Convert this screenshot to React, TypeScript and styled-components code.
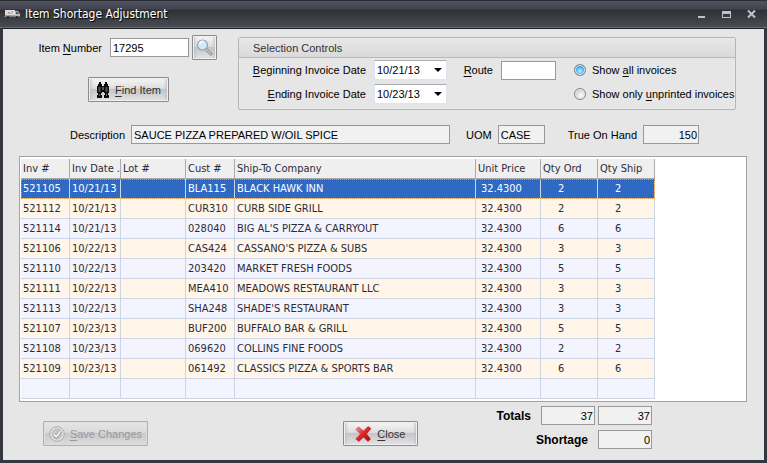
import React, { useState } from "react";
import styled, { createGlobalStyle, css } from "styled-components";

const GlobalStyle = createGlobalStyle`
  *, *::before, *::after { box-sizing: border-box; }
  body { margin: 0; background: #24262b; }
  u { text-decoration: underline; text-underline-offset: 2px; }
`;

const formFont = '"Liberation Sans", Arial, sans-serif';
const gridFont = '"DejaVu Sans Condensed", "DejaVu Sans", sans-serif';

const Window = styled.div`
  display: flex;
  flex-direction: column;
  min-height: 100vh;
  background: #34373d;
  font: 11px/14px ${formFont};
  color: #000;
`;

const TitleBar = styled.header`
  display: flex;
  align-items: center;
  height: 28px;
  padding: 0 7px 0 4px;
  border-top: 1px solid #2b2d33;
  border-bottom: 1px solid #666b76;
  background: linear-gradient(#50535f 0, #42454f 8px, #2f3135 9px, #484b52 100%);
`;

const Title = styled.h1`
  flex: 1;
  margin: 0 0 0 4px;
  font: 12px/16px ${gridFont};
  color: #fff;
  text-shadow: 1px 1px 1px #000;
`;

const WindowButtons = styled.div`
  display: flex;
  gap: 9px;
`;

const WindowButton = styled.button`
  display: flex;
  width: 16px;
  height: 16px;
  padding: 1px 2px;
  border: 0;
  background: none;
`;

const Body = styled.main`
  flex: 1;
  display: flex;
  flex-direction: column;
  margin: 0 3px 3px;
  border-top: 1px solid #1e2024;
  background: #e6e6e6;
`;

const TopRow = styled.div`
  display: flex;
  padding: 8px 28px 0 0;
`;

const ItemColumn = styled.div`
  display: flex;
  flex: none;
  flex-direction: column;
  align-items: flex-start;
  gap: 17px;
  width: 235px;
  padding-right: 21px;
  margin-top: -2px;
`;

const ItemLine = styled.div`
  display: flex;
  align-items: center;
  align-self: flex-end;
`;

const Label = styled.label<{ $bold?: boolean }>`
  white-space: nowrap;
  text-align: right;
  ${(p) => p.$bold && css`font: bold 12px/14px ${formFont};`}
`;

const ItemLabel = styled(Label)`
  margin-right: 8px;
`;

const TextBox = styled.input<{ $width: number }>`
  flex: none;
  width: ${(p) => p.$width}px;
  height: 19px;
  padding: 0 2px;
  border: 1px solid #999;
  border-radius: 0;
  background: #fff;
  color: #000;
  font: 11px/14px ${formFont};
  &:read-only { background: #f1f1f1; }
`;

const NumberBox = styled(TextBox)`
  padding-right: 1px;
  text-align: right;
`;

const PushButton = styled.button<{ $width: number }>`
  display: flex;
  flex: none;
  align-items: center;
  justify-content: center;
  gap: 5px;
  width: ${(p) => p.$width}px;
  height: 25px;
  padding: 0;
  border: 1px solid #8c8c8c;
  border-radius: 1px;
  background: linear-gradient(#f6f6f6 0, #dedee0 45%, #c5c5c8 50%, #e4e4e6 100%);
  box-shadow: inset 0 0 0 1px #f1f1f1, inset 3px 0 3px -1px #bdbdc0, inset -3px 0 3px -1px #bdbdc0;
  color: #333;
  font: 11px/14px ${formFont};
  white-space: nowrap;
  &:disabled {
    border-color: #b0b0b0;
    background: linear-gradient(#e6e6e6 0, #dadadb 45%, #c9c9cb 50%, #dcdcdd 100%);
    box-shadow: inset 0 0 0 1px #dedede;
    color: #999;
  }
`;

const LookupButton = styled(PushButton)`
  margin-left: 3px;
`;

const FindButton = styled(PushButton)`
  margin-left: 85px;
`;

const Panel = styled.section`
  flex: 1;
  border: 1px solid #b5b5b5;
  border-radius: 2px;
  box-shadow: inset 0 0 0 1px #ebebeb;
`;

const PanelTitle = styled.h2`
  margin: 0;
  padding: 3px 14px 2px;
  border-bottom: 1px solid #b9b9b9;
  background: linear-gradient(#e8e8e8, #dadada);
  font: 11px/14px ${formFont};
  color: #333;
`;

const PanelGrid = styled.div`
  display: grid;
  grid-template-columns: 127px 73px 38px 55px 1fr;
  grid-auto-rows: 20px;
  align-items: center;
  gap: 4px 8px;
  padding: 2px 0 5px;
`;

const RadioLabel = styled.label`
  grid-column: 5;
  display: flex;
  align-items: center;
  gap: 6px;
  margin-left: 10px;
  white-space: nowrap;
`;

const Radio = styled.input`
  appearance: none;
  flex: none;
  width: 12px;
  height: 12px;
  margin: 0;
  border: 1px solid #858585;
  border-radius: 50%;
  background: radial-gradient(circle at 60% 65%, #fff 0, #d3d3d3 60%);
  box-shadow: inset 0 0 0 1px #efefef;
  &:checked {
    background: radial-gradient(circle at 50% 60%, #c4f2ff 0, #4db7f5 45%, #2b86d8 70%);
  }
`;

const DateField = styled.div`
  display: grid;
  width: 73px;
  height: 20px;
  border: 1px solid #dfe3f0;
  border-top-color: #abadb3;
  background: #fff;
  & > * { grid-area: 1 / 1; }
  & > svg { justify-self: end; align-self: center; margin-right: 4px; pointer-events: none; }
`;

const DateSelect = styled.select`
  appearance: none;
  padding: 0 0 0 2px;
  border: 0;
  background: none;
  color: #000;
  font: 11px/14px ${formFont};
`;

const DescriptionRow = styled.div`
  display: flex;
  align-items: center;
  padding: 15px 65px 0 67px;
  gap: 6px;
`;

const Spacer = styled.span<{ $grow?: boolean }>`
  width: 4px;
  flex: ${(p) => (p.$grow ? "1 0 4px" : "none")};
`;

const GridFrame = styled.div`
  margin: 12px 17px 0 16px;
  padding: 2px 1px 2px;
  border: 1px solid #a3a3a3;
  background: #fff;
`;

const Table = styled.table`
  width: 634px;
  table-layout: fixed;
  border-collapse: separate;
  border-spacing: 0;
  font: 11px/14px ${gridFont};
  color: #2b2b38;
`;

const HeadCell = styled.th<{ $width: number }>`
  width: ${(p) => p.$width}px;
  height: 20px;
  padding: 0 0 0 2px;
  border-right: 1px solid #aaa;
  border-bottom: 1px solid #aaa;
  background: #efefef;
  font-weight: normal;
  text-align: left;
  white-space: nowrap;
`;

const SortMark = styled.span`
  margin-left: 3px;
`;

const Row = styled.tr<{ $selected?: boolean }>`
  background: #f4f4ff;
  &:nth-child(even) { background: #fff5e9; }
  ${(p) => p.$selected && css`
    background: #2f69c4;
    color: #fff;
    outline: 1px dotted #d09a50;
    outline-offset: -1px;
  `}
`;

const Cell = styled.td<{ $inset?: number }>`
  height: 20px;
  padding: 0 0 0 ${(p) => p.$inset ?? 2}px;
  border-right: 1px solid #ccd5e6;
  border-bottom: 1px solid #ccd5e6;
  white-space: nowrap;
`;

const Footer = styled.footer`
  display: flex;
  align-items: flex-start;
  padding: 4px 112px 11px 40px;
`;

const FooterGap = styled.span<{ $share: number }>`
  flex: ${(p) => p.$share} 1 0;
`;

const FooterButton = styled(PushButton)`
  margin-top: 15px;
`;

const Totals = styled.div`
  display: grid;
  grid-template-columns: 47px 54px 54px;
  align-items: center;
  justify-items: end;
  gap: 5px 3px;
`;

const TotalsLabel = styled(Label)<{ $span?: boolean }>`
  grid-column: ${(p) => (p.$span ? "1 / 3" : "1")};
  margin-right: 7px;
`;

const TruckIcon = () => (
  <svg width="17" height="10" viewBox="0 0 17 10" aria-hidden="true">
    <path d="M1 1h10v6H1z" fill="#dcdde0" />
    <path d="M1 6h10v1H1z" fill="#9a9ca3" />
    <path d="M4 5l1-2 1 2M7 5l2-3" stroke="#d8807a" fill="none" />
    <path d="M11 2h3l2 3v3h-5z" fill="#b9bcc4" />
    <path d="M12 3h2l1 2h-3z" fill="#50545e" />
    <path d="M0 7h16v1H0z" fill="#77797f" />
    <circle cx="4" cy="8" r="1" fill="#222" />
    <circle cx="13" cy="8" r="1" fill="#222" />
  </svg>
);

const MagnifierIcon = () => (
  <svg width="17" height="17" viewBox="0 0 17 17" aria-hidden="true">
    <path d="M10.500 10.500l4.500 4.500" stroke="#858585" strokeWidth="3" strokeLinecap="round" />
    <path d="M10 10l5 5" stroke="#d0d0d0" strokeWidth="1.200" strokeLinecap="round" />
    <circle cx="6.500" cy="6" r="5" fill="#cfeafa" stroke="#98a3ad" strokeWidth="1.200" />
    <path d="M3.500 5a3 3 0 0 1 4-2.300" stroke="#fff" strokeWidth="1.500" fill="none" />
  </svg>
);

const BinocularsIcon = () => (
  <svg width="14" height="16" viewBox="0 0 14 16" aria-hidden="true">
    <path d="M3 0h2v2h1v2h2V2h1V0h2v2h1v2h1v7h-1v2h1v3H8v-3h1v-2H8v-1H6v1H5v2h1v3H1v-3h1v-2H1V4h1V2h1z" fill="#0c0c0c" />
    <path d="M2 5h3v5H2zM9 5h3v5H9z" fill="#303030" />
    <path d="M3 5h1v5H3zM10 5h1v5h-1z" fill="#505050" />
    <path d="M3 12h1v2H3zM10 12h1v2h-1z" fill="#666" />
    <path d="M6 5h2v3H6z" fill="#555" />
  </svg>
);

const CheckIcon = () => (
  <svg width="16" height="16" viewBox="0 0 16 16" aria-hidden="true">
    <circle cx="8" cy="8" r="7.300" fill="#e4e4e4" stroke="#aaa" />
    <circle cx="8" cy="8" r="5" fill="#c9c9c9" stroke="#bcbcbc" />
    <path d="M5 8.500l2.200 2.200L11.500 5" stroke="#999" strokeWidth="3.400" fill="none" />
    <path d="M5 8.500l2.200 2.200L11.500 5" stroke="#f2f2f2" strokeWidth="1.800" fill="none" />
  </svg>
);

const CrossIcon = () => (
  <svg width="17" height="16" viewBox="0 0 17 16" aria-hidden="true">
    <defs>
      <linearGradient id="cross" x1="0" y1="0" x2="1" y2="1">
        <stop offset="0" stopColor="#f4a09a" />
        <stop offset="0.500" stopColor="#dc2222" />
        <stop offset="1" stopColor="#9d0c0c" />
      </linearGradient>
    </defs>
    <path d="M1 3.500L3.500 1l5 4L13 .5 16 2.500 11.500 8l4 5-2.500 2.500-4.500-4.500L4 15.500 .8 13 5.500 8z" fill="url(#cross)" stroke="#b52222" strokeWidth=".6" />
  </svg>
);

const MinimizeIcon = () => (
  <svg width="12" height="12" viewBox="0 0 12 12" aria-hidden="true">
    <path d="M2 9h7v2H2z" fill="#bcc3cd" />
  </svg>
);

const MaximizeIcon = () => (
  <svg width="12" height="12" viewBox="0 0 12 12" aria-hidden="true">
    <path d="M1 4h9v7H1zM2 7v3h7V7z" fill="#bcc3cd" fillRule="evenodd" />
  </svg>
);

const CloseIcon = () => (
  <svg width="12" height="12" viewBox="0 0 12 12" aria-hidden="true">
    <path d="M2 3.500l7 7M9 3.500l-7 7" stroke="#bcc3cd" strokeWidth="2" />
  </svg>
);

const DropArrow = () => (
  <svg width="8" height="4" viewBox="0 0 8 4" aria-hidden="true">
    <path d="M0 0h8L4 4z" fill="#000" />
  </svg>
);

const columns: [string, number][] = [
  ["Inv #", 49],
  ["Inv Date", 51],
  ["Lot #", 65],
  ["Cust #", 49],
  ["Ship-To Company", 241],
  ["Unit Price", 65],
  ["Qty Ord", 57],
  ["Qty Ship", 57],
];

const invoices: [string, string, string, string, number][] = [
  ["521105", "10/21/13", "BLA115", "BLACK HAWK INN", 2],
  ["521112", "10/21/13", "CUR310", "CURB SIDE GRILL", 2],
  ["521114", "10/21/13", "028040", "BIG AL'S PIZZA & CARRYOUT", 6],
  ["521106", "10/22/13", "CAS424", "CASSANO'S PIZZA & SUBS", 3],
  ["521110", "10/22/13", "203420", "MARKET FRESH FOODS", 5],
  ["521111", "10/22/13", "MEA410", "MEADOWS RESTAURANT LLC", 3],
  ["521113", "10/22/13", "SHA248", "SHADE'S RESTAURANT", 3],
  ["521107", "10/23/13", "BUF200", "BUFFALO BAR & GRILL", 5],
  ["521108", "10/23/13", "069620", "COLLINS FINE FOODS", 2],
  ["521109", "10/23/13", "061492", "CLASSICS PIZZA & SPORTS BAR", 6],
];

export default function App() {
  const [selected, setSelected] = useState(0);
  return (
    <Window>
      <GlobalStyle />
      <TitleBar>
        <TruckIcon />
        <Title>Item Shortage Adjustment</Title>
        <WindowButtons>
          <WindowButton aria-label="Minimize"><MinimizeIcon /></WindowButton>
          <WindowButton aria-label="Maximize"><MaximizeIcon /></WindowButton>
          <WindowButton aria-label="Close window"><CloseIcon /></WindowButton>
        </WindowButtons>
      </TitleBar>
      <Body>
        <TopRow>
          <ItemColumn>
            <ItemLine>
              <ItemLabel htmlFor="item">Item <u>N</u>umber</ItemLabel>
              <TextBox id="item" $width={79} defaultValue="17295" />
              <LookupButton $width={25} aria-label="Look up item"><MagnifierIcon /></LookupButton>
            </ItemLine>
            <FindButton $width={81}>
              <BinocularsIcon />
              <span><u>F</u>ind Item</span>
            </FindButton>
          </ItemColumn>
          <Panel>
            <PanelTitle>Selection Controls</PanelTitle>
            <PanelGrid>
              <Label htmlFor="begin"><u>B</u>eginning Invoice Date</Label>
              <DateField>
                <DateSelect id="begin"><option>10/21/13</option></DateSelect>
                <DropArrow />
              </DateField>
              <Label htmlFor="route"><u>R</u>oute</Label>
              <TextBox id="route" $width={55} />
              <RadioLabel>
                <Radio type="radio" name="show" defaultChecked />
                <span>Show <u>a</u>ll invoices</span>
              </RadioLabel>
              <Label htmlFor="end"><u>E</u>nding Invoice Date</Label>
              <DateField>
                <DateSelect id="end"><option>10/23/13</option></DateSelect>
                <DropArrow />
              </DateField>
              <RadioLabel>
                <Radio type="radio" name="show" />
                <span>Show only <u>u</u>nprinted invoices</span>
              </RadioLabel>
            </PanelGrid>
          </Panel>
        </TopRow>
        <DescriptionRow>
          <Label htmlFor="description">Description</Label>
          <TextBox id="description" $width={319} readOnly value="SAUCE PIZZA PREPARED W/OIL SPICE" />
          <Spacer />
          <Label htmlFor="uom">UOM</Label>
          <TextBox id="uom" $width={47} readOnly value="CASE" />
          <Spacer $grow />
          <Label htmlFor="onhand">True On Hand</Label>
          <NumberBox id="onhand" $width={56} readOnly value="150" />
        </DescriptionRow>
        <GridFrame>
          <Table>
            <thead>
              <tr>
                {columns.map(([name, width]) => (
                  <HeadCell key={name} $width={width}>
                    {name}
                    {name === "Inv Date" && <SortMark>.</SortMark>}
                  </HeadCell>
                ))}
              </tr>
            </thead>
            <tbody>
              {invoices.map(([inv, date, cust, company, qty], i) => (
                <Row key={inv} $selected={i === selected} onClick={() => setSelected(i)}>
                  <Cell>{inv}</Cell>
                  <Cell>{date}</Cell>
                  <Cell />
                  <Cell>{cust}</Cell>
                  <Cell>{company}</Cell>
                  <Cell $inset={5}>32.4300</Cell>
                  <Cell $inset={17}>{qty}</Cell>
                  <Cell $inset={17}>{qty}</Cell>
                </Row>
              ))}
              <Row>
                {columns.map(([name]) => <Cell key={name} />)}
              </Row>
            </tbody>
          </Table>
        </GridFrame>
        <Footer>
          <FooterButton $width={105} disabled>
            <CheckIcon />
            <span><u>S</u>ave Changes</span>
          </FooterButton>
          <FooterGap $share={8} />
          <FooterButton $width={75}>
            <CrossIcon />
            <span><u>C</u>lose</span>
          </FooterButton>
          <FooterGap $share={3} />
          <Totals>
            <TotalsLabel $bold htmlFor="ordered">Totals</TotalsLabel>
            <NumberBox id="ordered" $width={54} readOnly value="37" />
            <NumberBox aria-label="Total shipped" $width={54} readOnly value="37" />
            <TotalsLabel $bold $span htmlFor="shortage">Shortage</TotalsLabel>
            <NumberBox id="shortage" $width={54} readOnly value="0" />
          </Totals>
        </Footer>
      </Body>
    </Window>
  );
}
